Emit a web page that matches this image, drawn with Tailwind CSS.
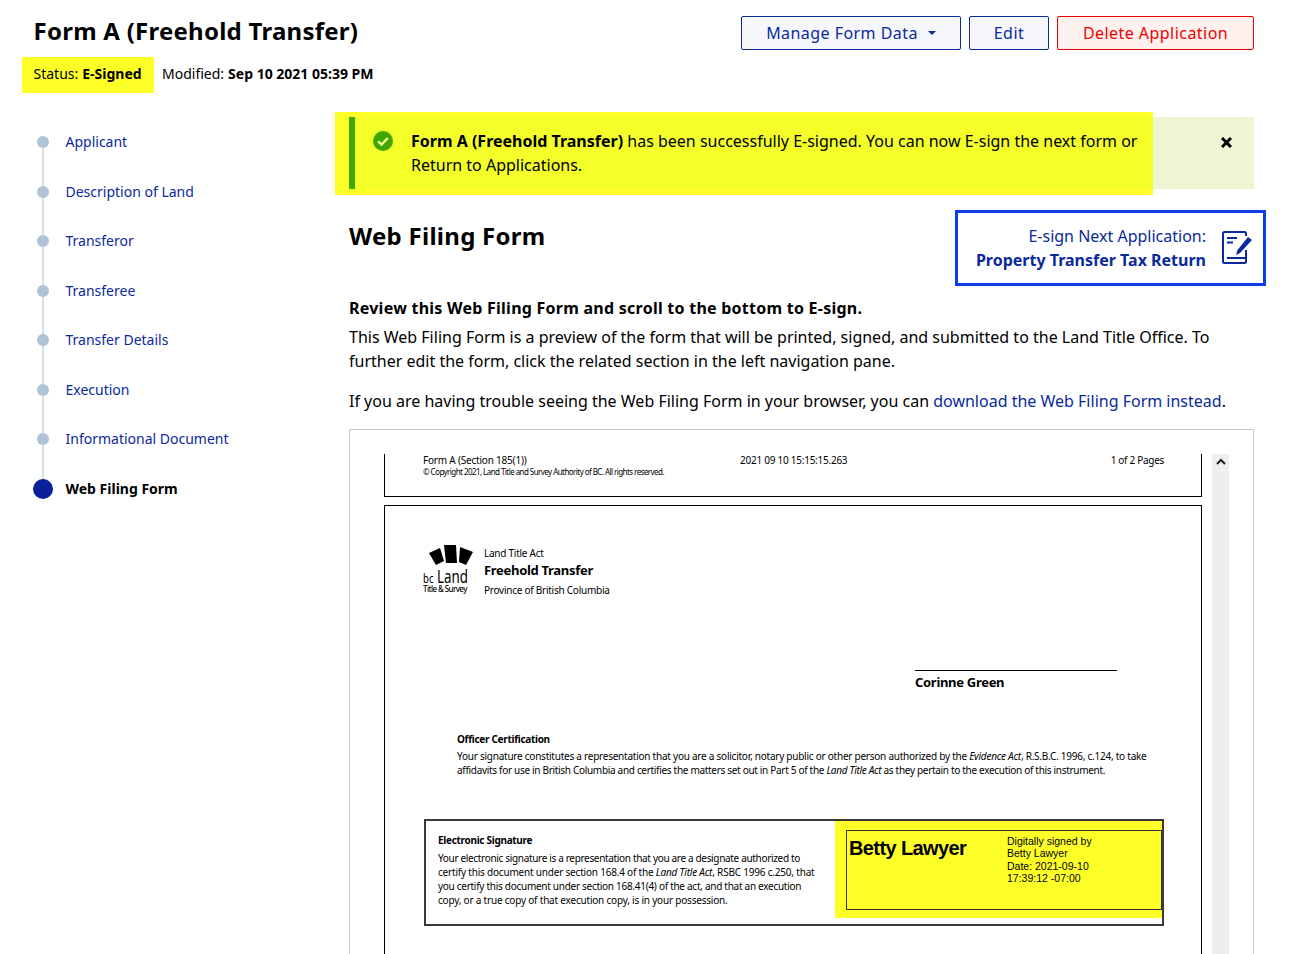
<!DOCTYPE html>
<html lang="en">
<head>
<meta charset="utf-8">
<title>Form A (Freehold Transfer)</title>
<script src="https://cdn.jsdelivr.net/npm/@tailwindcss/browser@4"></script>
</head>
<body class="bg-white">
<div class="h-[954px] overflow-hidden font-['Noto_Sans',sans-serif] text-black text-base">

    <!-- Page header -->
    <header class="flex justify-between h-[93px] pl-[22px] pr-[36px]">
        <div>
            <h1 class="pl-[11.5px] pt-[14px] h-[57px] text-[24px] leading-[34px] font-bold tracking-[0.25px]">Form A (Freehold Transfer)</h1>
            <div class="flex items-center text-sm">
                <div class="w-[132px] h-[36px] pl-[11.5px] pb-[2px] flex items-center gap-1 bg-[#ffff28]">Status: <b>E-Signed</b></div>
                <div class="ml-[8px] pb-[2px] flex gap-1">Modified: <b>Sep 10 2021 05:39 PM</b></div>
            </div>
        </div>
        <div class="flex gap-2 pt-[16px] h-[50px] text-[16px] tracking-[0.45px]">
            <button class="w-[220px] h-[34px] flex items-center justify-center gap-[10px] rounded-[2px] border border-[#0a2a9c] bg-[#f5f7fc] text-[#0a2a9c]">
                Manage Form Data
                <span class="w-0 h-0 border-x-[4px] border-x-transparent border-t-[4px] border-t-[#0a2a9c]"></span>
            </button>
            <button class="w-[80px] h-[34px] rounded-[2px] border border-[#0a2a9c] bg-[#f5f7fc] text-[#0a2a9c]">Edit</button>
            <button class="w-[197px] h-[34px] rounded-[2px] border border-[#f00000] bg-[#fff1ee] text-[#f00000]">Delete Application</button>
        </div>
    </header>

    <div class="flex">
        <!-- Left navigation -->
        <nav class="w-[349px] shrink-0 pt-[24.5px] pl-[33px]">
            <ul class="relative text-sm text-[#0a2aa0]">
                <li class="absolute left-[9px] top-[25px] w-[2px] h-[345px] bg-[#d5e1eb]"></li>
                <li class="relative flex items-center h-[49.5px]"><span class="w-[12px] h-[12px] ml-[4px] rounded-full bg-[#aec3d5]"></span><a class="ml-[16.5px]">Applicant</a></li>
                <li class="relative flex items-center h-[49.5px]"><span class="w-[12px] h-[12px] ml-[4px] rounded-full bg-[#aec3d5]"></span><a class="ml-[16.5px]">Description of Land</a></li>
                <li class="relative flex items-center h-[49.5px]"><span class="w-[12px] h-[12px] ml-[4px] rounded-full bg-[#aec3d5]"></span><a class="ml-[16.5px]">Transferor</a></li>
                <li class="relative flex items-center h-[49.5px]"><span class="w-[12px] h-[12px] ml-[4px] rounded-full bg-[#aec3d5]"></span><a class="ml-[16.5px]">Transferee</a></li>
                <li class="relative flex items-center h-[49.5px]"><span class="w-[12px] h-[12px] ml-[4px] rounded-full bg-[#aec3d5]"></span><a class="ml-[16.5px]">Transfer Details</a></li>
                <li class="relative flex items-center h-[49.5px]"><span class="w-[12px] h-[12px] ml-[4px] rounded-full bg-[#aec3d5]"></span><a class="ml-[16.5px]">Execution</a></li>
                <li class="relative flex items-center h-[49.5px]"><span class="w-[12px] h-[12px] ml-[4px] rounded-full bg-[#aec3d5]"></span><a class="ml-[16.5px]">Informational Document</a></li>
                <li class="relative flex items-center h-[49.5px]"><span class="w-[20px] h-[20px] rounded-full bg-[#0a1f9c]"></span><a class="ml-[12.5px] font-bold text-black">Web Filing Form</a></li>
            </ul>
        </nav>

        <!-- Main content -->
        <main class="w-[905px] shrink-0">
            <!-- Success alert -->
            <div class="relative mt-[24px] h-[72px] bg-[#edf5d3]">
                <div class="absolute -left-[14px] -top-[5px] w-[818px] h-[83px] bg-[#ffff28]"></div>
                <div class="absolute left-0 top-0 w-[804px] h-[72px] bg-[#f4ff2a]"></div>
                <div class="absolute left-0 top-0 w-[6px] h-[72px] bg-[#41a800]"></div>
                <div class="relative flex pt-[12px] pl-[24px] leading-[24px]">
                    <svg class="w-[20px] h-[20px] mt-[2px] shrink-0" viewBox="0 0 20 20">
                        <circle cx="10" cy="10" r="10" fill="#41a800"/>
                        <path d="M5.2 10.4l3.3 3.2 6.3-6.6" fill="none" stroke="#f4ff9a" stroke-width="2.4"/>
                    </svg>
                    <p class="ml-[18px] w-[745px]"><b>Form A (Freehold Transfer)</b> has been successfully E-signed. You can now E-sign the next form or Return to Applications.</p>
                </div>
                <svg class="absolute right-[22px] top-[20px] w-[11px] h-[11px]" viewBox="0 0 11 11">
                    <path d="M1 1l9 9M10 1l-9 9" stroke="#000" stroke-width="3"/>
                </svg>
            </div>

            <!-- Heading and next application -->
            <div class="flex justify-between mt-[21px] -mr-[12px]">
                <h2 class="pt-[8px] text-[24px] leading-[36px] font-bold tracking-[0.27px]">Web Filing Form</h2>
                <a class="w-[311px] h-[76px] pt-[10px] pr-[11px] flex justify-end gap-[16px] border-[3px] border-[#0a3fe8] text-[#0a2a9c]">
                    <span class="text-right leading-[24px] pt-[1px]">E-sign Next Application:<br><b>Property Transfer Tax Return</b></span>
                    <svg class="w-[30px] h-[33px] mt-[8px] shrink-0" viewBox="0 0 30 33" fill="none" stroke="#0a2a9c" stroke-width="2">
                        <path d="M24 5V2.5a1.5 1.5 0 0 0-1.5-1.5H2.5A1.5 1.5 0 0 0 1 2.5v28A1.5 1.5 0 0 0 2.5 32h20a1.5 1.5 0 0 0 1.5-1.5V19"/>
                        <path d="M5 7h10M5 11.5h6M5 27h19"/>
                        <path d="M14 24l1.5-5L26 6l4 3-12 13z" fill="#0a2a9c" stroke="none"/>
                    </svg>
                </a>
            </div>

            <!-- Instructions -->
            <div class="mt-[10px] leading-[24px]">
                <p class="font-bold tracking-[0.25px]">Review this Web Filing Form and scroll to the bottom to E-sign.</p>
                <p class="mt-[5px]">This Web Filing Form is a preview of the form that will be printed, signed, and submitted to the Land Title Office. To further edit the form, click the related section in the left navigation pane.</p>
                <p class="mt-[16px]">If you are having trouble seeing the Web Filing Form in your browser, you can <a class="text-[#0a2a9c]">download the Web Filing Form instead</a>.</p>
            </div>

            <!-- PDF preview -->
            <div class="mt-[16px] h-[600px] flex border border-[#b9cad6] pt-[24px] pl-[34px] text-black">
                <div class="w-[818px] shrink-0 text-[10px]">
                    <!-- Page 1 footer -->
                    <div class="flex h-[43px] pl-[38px] pr-[37px] border-x border-b border-black leading-[12px]">
                        <div class="w-[317px]">
                            <p class="tracking-[-0.2px]">Form A (Section 185(1))</p>
                            <p class="mt-[1px] text-[8px] leading-[10px] tracking-[-0.56px] whitespace-nowrap">© Copyright 2021, Land Title and Survey Authority of BC. All rights reserved.</p>
                        </div>
                        <p class="tracking-[-0.25px]">2021 09 10 15:15:15.263</p>
                        <p class="ml-auto tracking-[-0.3px]">1 of 2 Pages</p>
                    </div>

                    <!-- Page 2 -->
                    <div class="mt-[8px] h-[500px] border border-black">
                        <div class="flex pt-[38px] pl-[38px]">
                            <div class="w-[61px] h-[50px] relative">
                                <svg class="absolute left-[6px] top-0 w-[44px] h-[21px]" viewBox="0 0 44 21" fill="#000">
                                    <path d="M0 9L11 4l4 13-8 4z"/>
                                    <path d="M15 1h12l1 18h-11z"/>
                                    <path d="M31 3l13 5-7 13-7-3z"/>
                                </svg>
                                <p class="absolute left-0 top-[24px] text-[18px] leading-[16px] whitespace-nowrap origin-left scale-x-[0.74]"><span class="text-[13px]">bc</span> Land</p>
                                <p class="absolute left-0 top-[40px] text-[8px] leading-[10px] tracking-[-0.6px] font-medium whitespace-nowrap">Title &amp; Survey</p>
                            </div>
                            <div class="pt-[2px]">
                                <p class="leading-[14px] tracking-[-0.25px]">Land Title Act</p>
                                <p class="text-[13px] leading-[20px] font-bold tracking-[-0.3px]">Freehold Transfer</p>
                                <p class="mt-[3px] leading-[14px] tracking-[-0.25px]">Province of British Columbia</p>
                            </div>
                        </div>

                        <div class="ml-[530px] mt-[73px] w-[202px] border-t border-black pt-[2px] text-[13px] leading-[18px] font-bold tracking-[-0.3px]">Corinne Green</div>

                        <div class="ml-[72px] mt-[41px] leading-[14px]">
                            <p class="font-bold tracking-[-0.3px]">Officer Certification</p>
                            <p class="mt-[3px] whitespace-nowrap"><span class="block tracking-[-0.24px]">Your signature constitutes a representation that you are a solicitor, notary public or other person authorized by the <i>Evidence Act</i>, R.S.B.C. 1996, c.124, to take</span><span class="block tracking-[-0.31px]">affidavits for use in British Columbia and certifies the matters set out in Part 5 of the <i>Land Title Act</i> as they pertain to the execution of this instrument.</span></p>
                        </div>

                        <!-- Signature box -->
                        <div class="ml-[39px] mt-[42px] w-[740px] h-[107px] flex border-2 border-[#3a3a3a]">
                            <div class="w-[409px] shrink-0 pt-[12px] pl-[12px] leading-[14px]">
                                <p class="font-bold tracking-[-0.3px]">Electronic Signature</p>
                                <p class="mt-[4px] whitespace-nowrap"><span class="block tracking-[-0.33px]">Your electronic signature is a representation that you are a designate authorized to</span><span class="block tracking-[-0.2px]">certify this document under section 168.4 of the <i>Land Title Act</i>, RSBC 1996 c.250, that</span><span class="block tracking-[-0.28px]">you certify this document under section 168.41(4) of the act, and that an execution</span><span class="block tracking-[-0.2px]">copy, or a true copy of that execution copy, is in your possession.</span></p>
                            </div>
                            <div class="flex-1 h-[97px] pt-[9px] pl-[11px] bg-[#ffff28]">
                                <div class="flex h-[80px] border border-[#333] font-['Liberation_Sans',sans-serif]">
                                    <p class="w-[160px] pl-[2px] pt-[5px] text-[20px] leading-[24px] font-bold tracking-[-0.6px] whitespace-nowrap">Betty Lawyer</p>
                                    <p class="pt-[4px] text-[10.5px] leading-[12.3px]">Digitally signed by<br>Betty Lawyer<br>Date: 2021-09-10<br>17:39:12 -07:00</p>
                                </div>
                            </div>
                        </div>
                    </div>
                </div>

                <!-- Scrollbar -->
                <div class="ml-[10px] w-[17px] bg-[#eeeeee] flex justify-center pt-[4px]">
                    <svg class="w-[10px] h-[7px]" viewBox="0 0 10 7"><path d="M1 6l4-4 4 4" fill="none" stroke="#222" stroke-width="2"/></svg>
                </div>
            </div>
        </main>
    </div>
</div>
</body>
</html>
